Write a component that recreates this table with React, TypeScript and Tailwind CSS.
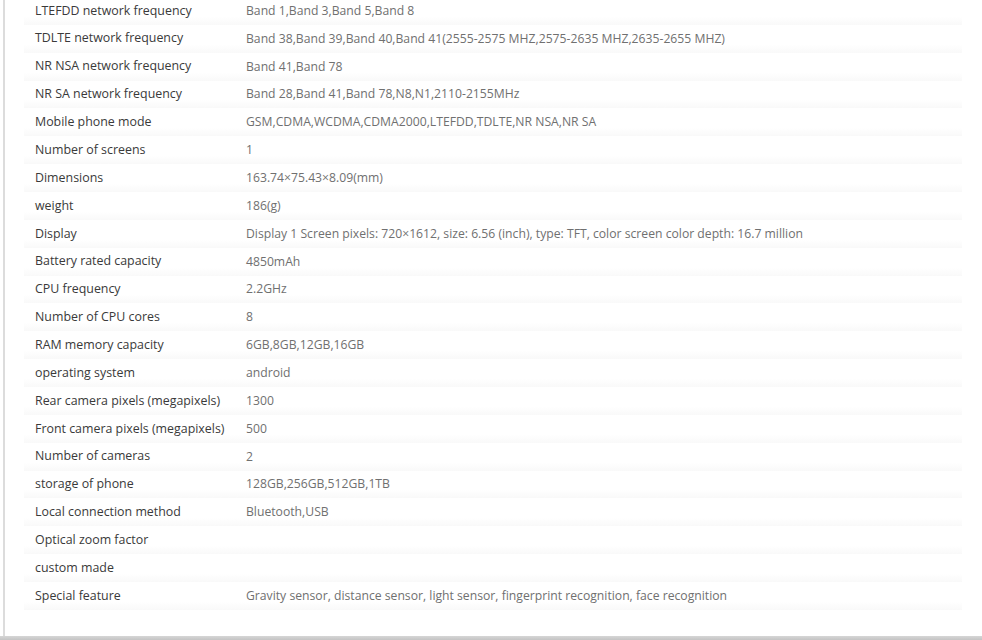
const specs: [string, string][] = [
  ['LTEFDD network frequency', 'Band 1,Band 3,Band 5,Band 8'],
  ['TDLTE network frequency', 'Band 38,Band 39,Band 40,Band 41(2555-2575 MHZ,2575-2635 MHZ,2635-2655 MHZ)'],
  ['NR NSA network frequency', 'Band 41,Band 78'],
  ['NR SA network frequency', 'Band 28,Band 41,Band 78,N8,N1,2110-2155MHz'],
  ['Mobile phone mode', 'GSM,CDMA,WCDMA,CDMA2000,LTEFDD,TDLTE,NR NSA,NR SA'],
  ['Number of screens', '1'],
  ['Dimensions', '163.74×75.43×8.09(mm)'],
  ['weight', '186(g)'],
  ['Display', 'Display 1 Screen pixels: 720×1612, size: 6.56 (inch), type: TFT, color screen color depth: 16.7 million'],
  ['Battery rated capacity', '4850mAh'],
  ['CPU frequency', '2.2GHz'],
  ['Number of CPU cores', '8'],
  ['RAM memory capacity', '6GB,8GB,12GB,16GB'],
  ['operating system', 'android'],
  ['Rear camera pixels (megapixels)', '1300'],
  ['Front camera pixels (megapixels)', '500'],
  ['Number of cameras', '2'],
  ['storage of phone', '128GB,256GB,512GB,1TB'],
  ['Local connection method', 'Bluetooth,USB'],
  ['Optical zoom factor', ''],
  ['custom made', ''],
  ['Special feature', 'Gravity sensor, distance sensor, light sensor, fingerprint recognition, face recognition'],
]

export default function App() {
  return (
    <div
      className="h-[640px] w-[982px] overflow-hidden bg-white"
      style={{ fontFamily: '"Open Sans", "Liberation Sans", sans-serif' }}
    >
      <div className="ml-[3px] flex h-[636px] flex-col border-l-2 border-[#dcdcdc] bg-white">
        <div className="-mt-[3px] mr-[20px] pl-[19px]">
          {specs.map(([label, value]) => (
            <div
              key={label}
              className="flex h-[27.86px] items-center bg-linear-to-b from-white from-70% to-[#f9f9f9]"
            >
              <div className="w-[222px] shrink-0 pl-[11px] text-[12.4px] font-medium text-[#3a3a3a]">{label}</div>
              <div className="text-[12.2px] text-[#707070]">{value}</div>
            </div>
          ))}
        </div>
      </div>
      <div className="h-[4px] bg-linear-to-b from-[#d6d6d6] to-[#c4c4c4]" />
    </div>
  )
}
